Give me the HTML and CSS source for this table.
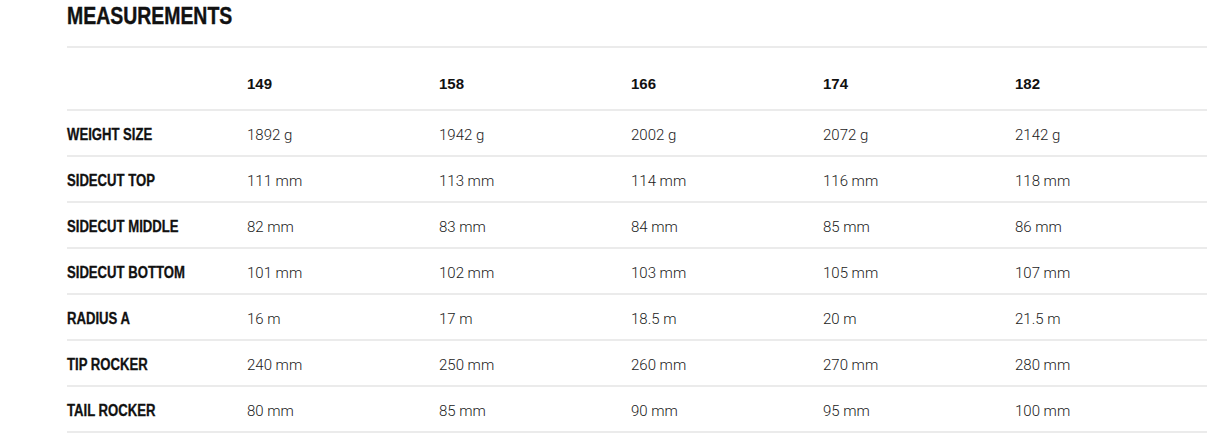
FILE: index.html
```html
<!DOCTYPE html>
<html>
<head>
<meta charset="utf-8">
<link rel="stylesheet" href="styles.css">
</head>
<body>
<section class="measurements">
  <h2 class="title"><span class="cond">MEASUREMENTS</span></h2>
  <div class="table">
    <div class="row head">
      <div class="label"></div>
      <div class="cell">149</div>
      <div class="cell">158</div>
      <div class="cell">166</div>
      <div class="cell">174</div>
      <div class="cell">182</div>
    </div>
    <div class="row">
      <div class="label"><span class="cond">WEIGHT SIZE</span></div>
      <div class="cell">1892 g</div>
      <div class="cell">1942 g</div>
      <div class="cell">2002 g</div>
      <div class="cell">2072 g</div>
      <div class="cell">2142 g</div>
    </div>
    <div class="row">
      <div class="label"><span class="cond">SIDECUT TOP</span></div>
      <div class="cell">111 mm</div>
      <div class="cell">113 mm</div>
      <div class="cell">114 mm</div>
      <div class="cell">116 mm</div>
      <div class="cell">118 mm</div>
    </div>
    <div class="row">
      <div class="label"><span class="cond">SIDECUT MIDDLE</span></div>
      <div class="cell">82 mm</div>
      <div class="cell">83 mm</div>
      <div class="cell">84 mm</div>
      <div class="cell">85 mm</div>
      <div class="cell">86 mm</div>
    </div>
    <div class="row">
      <div class="label"><span class="cond">SIDECUT BOTTOM</span></div>
      <div class="cell">101 mm</div>
      <div class="cell">102 mm</div>
      <div class="cell">103 mm</div>
      <div class="cell">105 mm</div>
      <div class="cell">107 mm</div>
    </div>
    <div class="row">
      <div class="label"><span class="cond">RADIUS A</span></div>
      <div class="cell">16 m</div>
      <div class="cell">17 m</div>
      <div class="cell">18.5 m</div>
      <div class="cell">20 m</div>
      <div class="cell">21.5 m</div>
    </div>
    <div class="row">
      <div class="label"><span class="cond">TIP ROCKER</span></div>
      <div class="cell">240 mm</div>
      <div class="cell">250 mm</div>
      <div class="cell">260 mm</div>
      <div class="cell">270 mm</div>
      <div class="cell">280 mm</div>
    </div>
    <div class="row last">
      <div class="label"><span class="cond">TAIL ROCKER</span></div>
      <div class="cell">80 mm</div>
      <div class="cell">85 mm</div>
      <div class="cell">90 mm</div>
      <div class="cell">95 mm</div>
      <div class="cell">100 mm</div>
    </div>
  </div>
</section>
</body>
</html>
```
FILE: styles.css
```css
html, body {
  margin: 0;
  padding: 0;
  background: #fff;
}
.measurements {
  width: 1140px;
  margin-left: 67px;
  font-family: "Liberation Sans", Arial, sans-serif;
  color: #111;
}
.cond {
  display: inline-block;
  transform-origin: left center;
  white-space: nowrap;
}
.title {
  margin: 0;
  height: 46px;
  font-size: 24px;
  line-height: 32px;
  font-weight: bold;
  -webkit-text-stroke: 0.4px #111;
}
.title .cond {
  transform: scaleX(0.81);
}
.table {
  display: flex;
  flex-direction: column;
}
.row {
  display: grid;
  grid-template-columns: 180px repeat(5, 192px);
  align-items: center;
  box-sizing: border-box;
  height: 46px;
  padding-top: 4px;
  border-top: 2px solid #ebebeb;
}
.row.head {
  height: 63px;
  padding-top: 9px;
}
.row.last {
  height: 48px;
  border-bottom: 2px solid #ebebeb;
}
.label {
  font-size: 16px;
  font-weight: bold;
  color: #111;
}
.label .cond {
  transform: scaleX(0.82);
  -webkit-text-stroke: 0.3px #111;
}
.cell {
  font-family: Roboto, "Liberation Sans", sans-serif;
  font-weight: 300;
  font-size: 15px;
  color: #1a1a1a;
}
.head .cell {
  font-family: "Liberation Sans", Arial, sans-serif;
  font-weight: bold;
  color: #111;
}
```
